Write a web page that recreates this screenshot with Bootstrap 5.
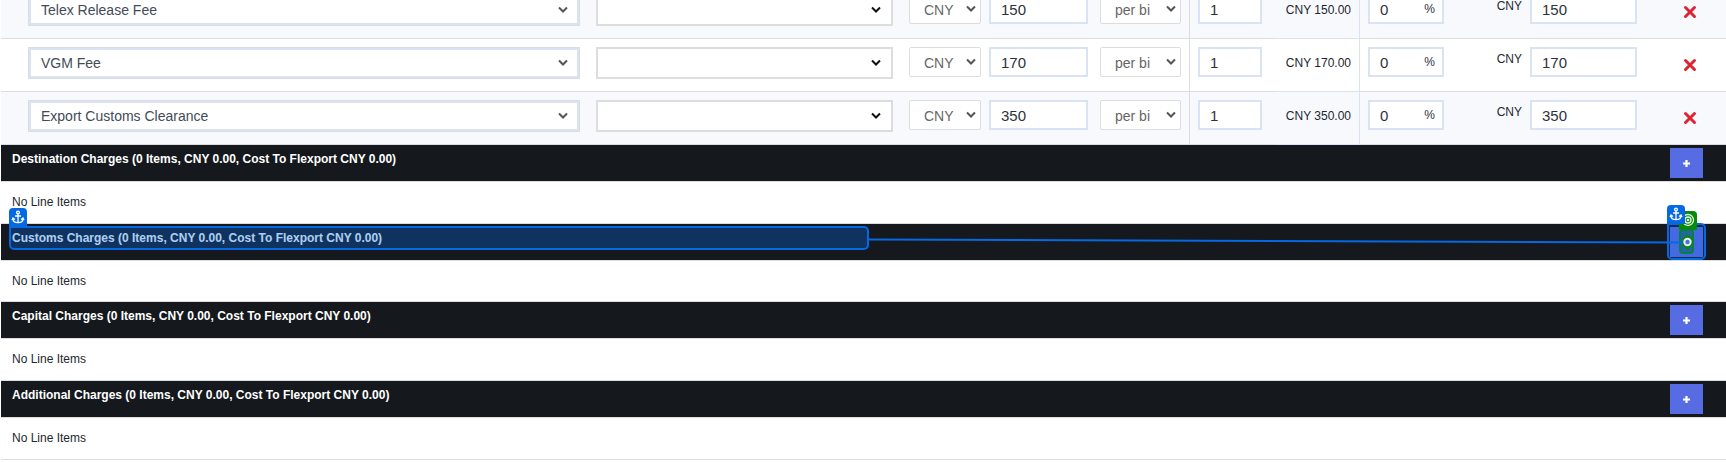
<!DOCTYPE html>
<html lang="en">
<head>
<meta charset="utf-8">
<meta name="viewport" content="width=device-width, initial-scale=1">
<title>Charges</title>
<link href="https://cdn.jsdelivr.net/npm/bootstrap@5.3.0/dist/css/bootstrap.min.css" rel="stylesheet">
<style>
  body { font: 12px/16px "Liberation Sans", Arial, sans-serif; color: #22272e; background: #fff; padding-left: 1px; }
  .charges-clip { overflow: hidden; }
  .charges { table-layout: fixed; border-collapse: separate; border-spacing: 0; margin-top: -14px; }
  .charges td { height: 53px; padding: 8px 8px 0; vertical-align: top; border-bottom: 1px solid #ddd; }
  .charges tr:nth-child(odd) td { background: #f8f9fd; }
  .charges td.cell-rule { border-right: 1px solid #ddd; }
  .charges td.cell-rule-blue { border-right: 1px solid #d9e3f4; border-bottom-color: #d9e3f4; }
  .charges .form-control, .charges .form-select { font-size: 15px; line-height: 20px; height: 30px; border: 2px solid #d9e3f4; border-radius: 0; padding: 0 10px; color: #2d333d; background-color: #fff; }
  .charges .form-select { font-size: 14px; background-image: url("data:image/svg+xml,%3Csvg xmlns='http://www.w3.org/2000/svg' viewBox='0 0 10 8'%3E%3Cpath d='M1 1.5l4 4 4-4' fill='none' stroke='%23555' stroke-width='2'/%3E%3C/svg%3E"); background-size: 10px 8px; background-position: right 4px center; }
  .charges .pick-charge { height: 32px; color: #434b58; border-color: #d9e3f4; box-shadow: inset 0 0 0 1px #d9e3f4; outline: 1px solid #ddd; outline-offset: -1px; background-position: right 10px center; padding-left: 11px; }
  .charges .pick-vendor { height: 32px; border-color: #ddd; background-position: right 10px center; background-image: url("data:image/svg+xml,%3Csvg xmlns='http://www.w3.org/2000/svg' viewBox='0 0 10 8'%3E%3Cpath d='M1 1.5l4 4 4-4' fill='none' stroke='%23111' stroke-width='2'/%3E%3C/svg%3E"); }
  .charges .pick-small { border: 1px solid #ddd; border-radius: 2px; color: #666; padding: 2px 18px 0 14px; }
  .pct-sign { top: 7px; right: 9px; font-size: 12px; color: #2d333d; }
  .btn-remove { width: 14px; height: 14px; margin: 11px 0 0 30px; padding: 0; border: 0; background: none; }
  .section-bar { min-height: 36px; padding: 3px 23px 3px 11px; background: #15191d; color: #fff; }
  .section-bar h2 { font-size: 12px; line-height: 16px; font-weight: 700; margin: 3px 0 0; }
  .btn-add { width: 33px; height: 30px; padding: 0; border: 0; border-radius: 0; background: #576be3; }
  .no-items { margin: 0; padding: 12px 11px; border-top: 1px solid #ddd; border-bottom: 1px solid #ddd; height: 43px; }
  .no-items-short { height: 42px; }
  .mark-label { top: 2px; left: 8px; width: calc(50% - 3px); height: 24px; border: 2px solid #0469e3; border-radius: 0 5px 5px 5px; background: #0469e354; }
  .mark-button { top: -1px; right: 20px; width: 39px; height: 37px; border: 2px solid #0469e3; border-radius: 0 5px 5px 5px; background: #0469e338; }
  .mark-line { top: 13px; left: calc(50% + 5px); right: 40px; height: 8px; }
  .pin { width: 18px; height: 19px; border-radius: 4px 4px 0 0; background: #0469e3; }
  .pin-label { top: -16px; left: 8px; }
  .pin-button { top: -19px; right: 41px; }
  .pin-target { top: -13px; right: 29px; background: #078a0c; }
  .mark-target { top: 5px; right: 32px; width: 15px; height: 25px; border: 2px solid #078044; border-radius: 4px; background: #18618bb0; }
  .mark-dot { top: 10px; right: 30px; }
</style>
</head>
<body>
<svg class="d-none">
  <symbol id="anchor" viewBox="0 0 18 18"><g fill="none" stroke="#fff" stroke-width="1.3"><circle cx="9" cy="4.5" r="1.4"/><path d="M9 6v9M6 8h6M4 10.5c0 2.600 2 4.200 5 4.200s5-1.600 5-4.200M3 12l1-2 2 1.500M15 12l-1-2-2 1.500"/></g></symbol>
  <symbol id="rings" viewBox="0 0 18 18"><g fill="none" stroke="#e4f6e4" stroke-width="1.3"><circle cx="9" cy="9" r="5.500"/><circle cx="9" cy="9" r="3"/><circle cx="9" cy="9" r=".7"/></g></symbol>
  <symbol id="cross" viewBox="0 0 14 14"><path d="M2.500 2.500l9 9M11.500 2.500l-9 9" stroke="#dc2433" stroke-width="3" stroke-linecap="round"/></symbol>
  <symbol id="plus" viewBox="0 0 9 9"><path d="M4.500 1v7M1 4.500h7" stroke="#fff" stroke-width="2.200"/></symbol>
</svg>
<main>
  <div class="charges-clip">
    <table class="charges w-100">
      <colgroup><col style="width:34%"><col><col style="width:84px"><col style="width:107px"><col style="width:98px"><col style="width:85px"><col style="width:85px"><col style="width:92px"><col style="width:193px"><col style="width:81px"></colgroup>
      <tbody id="rows"></tbody>
    </table>
  </div>

  <section>
    <div class="section-bar d-flex justify-content-between"><h2>Destination Charges (0 Items, CNY 0.00, Cost To Flexport CNY 0.00)</h2><button class="btn-add" aria-label="Add destination charge"><svg width="9" height="9"><use href="#plus"/></svg></button></div>
    <p class="no-items">No Line Items</p>
  </section>
  <section>
    <div class="section-bar position-relative d-flex justify-content-between"><h2>Customs Charges (0 Items, CNY 0.00, Cost To Flexport CNY 0.00)</h2><button class="btn-add" aria-label="Add customs charge"></button>
      <div class="mark-label position-absolute"></div>
      <div class="mark-button position-absolute"></div>
      <svg class="pin pin-target position-absolute"><use href="#rings" width="18" height="18"/></svg>
      <div class="mark-target position-absolute"></div>
      <div class="mark-line position-absolute"><svg class="d-block w-100 h-100" viewBox="0 0 800 8" preserveAspectRatio="none"><path d="M0 2.500L800 5.500" stroke="#0469e3" stroke-width="2" vector-effect="non-scaling-stroke"/></svg></div>
      <svg class="mark-dot position-absolute" width="17" height="16" viewBox="0 0 17 16"><path d="M8.500 0l5 5v6l-5 5-5-5V5z" fill="#078a0c"/><circle cx="8.500" cy="8" r="3.200" fill="#576be3" stroke="#e6f0ee" stroke-width="2"/></svg>
      <svg class="pin pin-label position-absolute"><use href="#anchor" width="18" height="18"/></svg>
      <svg class="pin pin-button position-absolute"><use href="#anchor" width="18" height="18"/></svg>
    </div>
    <p class="no-items no-items-short">No Line Items</p>
  </section>
  <section>
    <div class="section-bar d-flex justify-content-between"><h2>Capital Charges (0 Items, CNY 0.00, Cost To Flexport CNY 0.00)</h2><button class="btn-add" aria-label="Add capital charge"><svg width="9" height="9"><use href="#plus"/></svg></button></div>
    <p class="no-items">No Line Items</p>
  </section>
  <section>
    <div class="section-bar d-flex justify-content-between"><h2>Additional Charges (0 Items, CNY 0.00, Cost To Flexport CNY 0.00)</h2><button class="btn-add" aria-label="Add additional charge"><svg width="9" height="9"><use href="#plus"/></svg></button></div>
    <p class="no-items">No Line Items</p>
  </section>
</main>
<script>
  const fees = [['Telex Release Fee', 150], ['VGM Fee', 170], ['Export Customs Clearance', 350]];
  document.getElementById('rows').innerHTML = fees.map(([name, amount]) => `
    <tr>
      <td style="padding-left:27px"><select class="form-select pick-charge" aria-label="Charge"><option>${name}</option></select></td>
      <td><select class="form-select pick-vendor" aria-label="Vendor"><option></option></select></td>
      <td class="pe-1"><select class="form-select pick-small" aria-label="Currency"><option>CNY</option></select></td>
      <td class="px-1"><input class="form-control" aria-label="Rate" value="${amount}"></td>
      <td class="cell-rule"><select class="form-select pick-small" aria-label="Unit"><option>per bi</option></select></td>
      <td style="padding-right:13px"><input class="form-control" aria-label="Quantity" value="1"></td>
      <td class="cell-rule-blue text-end text-nowrap px-2"><div class="pt-2">CNY ${amount}.00</div></td>
      <td><div class="position-relative"><input class="form-control" aria-label="Percent" value="0"><span class="pct-sign position-absolute">%</span></div></td>
      <td><label class="d-flex justify-content-end gap-2"><span class="pt-1">CNY</span><input class="form-control" style="width:107px" value="${amount}"></label></td>
      <td><button class="btn-remove d-block" aria-label="Remove"><svg class="d-block" width="14" height="14"><use href="#cross"/></svg></button></td>
    </tr>`).join('');
</script>
<script src="https://cdn.jsdelivr.net/npm/bootstrap@5.3.0/dist/js/bootstrap.bundle.min.js"></script>
</body>
</html>
